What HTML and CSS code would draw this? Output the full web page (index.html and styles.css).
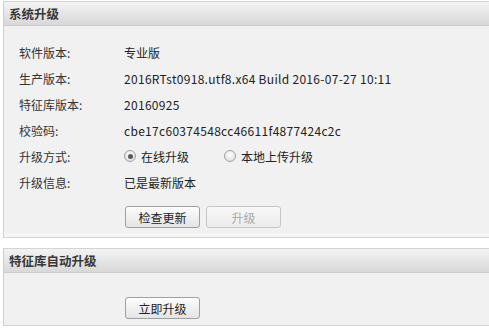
FILE: index.html
```html
<!DOCTYPE html>
<html>
<head>
<meta charset="utf-8">
<link rel="stylesheet" href="styles.css">
</head>
<body>
<div class="panel panel-main">
  <div class="panel-head">系统升级</div>
  <div class="panel-body">
    <div class="rows">
      <div class="row"><span class="label">软件版本:</span><span class="value">专业版</span></div>
      <div class="row"><span class="label">生产版本:</span><span class="value latin">2016RTst0918.utf8.x64 Build 2016-07-27 10:11</span></div>
      <div class="row"><span class="label">特征库版本:</span><span class="value latin">20160925</span></div>
      <div class="row"><span class="label">校验码:</span><span class="value latin">cbe17c60374548cc46611f4877424c2c</span></div>
      <div class="row"><span class="label">升级方式:</span>
        <span class="value radios">
          <span class="radio-opt"><span class="radio checked"></span>在线升级</span>
          <span class="radio-opt"><span class="radio"></span>本地上传升级</span>
        </span>
      </div>
      <div class="row"><span class="label">升级信息:</span><span class="value">已是最新版本</span></div>
    </div>
    <div class="actions">
      <button class="btn">检查更新</button>
      <button class="btn" disabled>升级</button>
    </div>
  </div>
  <div class="panel-foot"></div>
</div>
<div class="panel panel-auto">
  <div class="panel-head">特征库自动升级</div>
  <div class="panel-body body-auto">
    <div class="actions">
      <button class="btn">立即升级</button>
    </div>
  </div>
</div>
</body>
</html>
```

FILE: styles.css
```css
html, body {
  margin: 0;
  padding: 0;
  background: #ffffff;
}
body {
  font-family: "Noto Sans CJK SC", "Noto Sans", sans-serif;
  font-size: 12px;
  color: #222;
  padding-top: 1px;
  padding-left: 3px;
}
.panel {
  border-top: 1px solid #d4d4d4;
  border-left: 1px solid #cfcfcf;
  border-bottom: 1px solid #d4d4d4;
}
.panel-auto {
  margin-top: 10px;
}
.panel-head {
  height: 23px;
  line-height: 23px;
  padding-left: 5px;
  font-size: 12.5px;
  font-weight: bold;
  color: #383838;
  background: linear-gradient(#f3f3f3, #d8d8d8);
  border-bottom: 1px solid #cccccc;
}
.panel-body {
  background: #f1f1f1;
  padding: 13px 0 5px 15px;
}
.panel-foot {
  height: 4px;
  background: #f6f6f6;
}
.rows {
  display: flex;
  flex-direction: column;
}
.row {
  display: flex;
  align-items: center;
  height: 26px;
}
.label {
  width: 105px;
  color: #333;
}
.value {
  color: #222;
}
.latin {
  letter-spacing: 0.3px;
}
.radios {
  display: flex;
  align-items: center;
  gap: 35px;
}
.radio-opt {
  display: flex;
  align-items: center;
  gap: 5px;
}
.radio {
  width: 12px;
  height: 12px;
  border-radius: 50%;
  border: 1px solid #a0a0a0;
  background: radial-gradient(circle at 50% 40%, #ffffff, #d8d8d8);
  box-sizing: border-box;
  position: relative;
}
.radio.checked::after {
  content: "";
  position: absolute;
  left: 2.5px;
  top: 2.5px;
  width: 5px;
  height: 5px;
  border-radius: 50%;
  background: #5a5a5a;
}
.actions {
  display: flex;
  gap: 6px;
  margin-top: 11px;
  padding-left: 106px;
}
.btn {
  width: 75px;
  height: 22px;
  padding: 0;
  font-family: "Noto Sans CJK SC", "Noto Sans", sans-serif;
  font-size: 12px;
  color: #222;
  background: linear-gradient(#fdfdfd, #e4e4e4);
  border: 1px solid #9f9f9f;
  border-radius: 3px;
}
.btn:disabled {
  color: #a8a8a8;
  border-color: #c6c6c6;
  background: linear-gradient(#f8f8f8, #ececec);
}
.body-auto {
  padding-top: 24px;
  padding-bottom: 6px;
}
.body-auto .actions {
  margin-top: 0;
}
```
